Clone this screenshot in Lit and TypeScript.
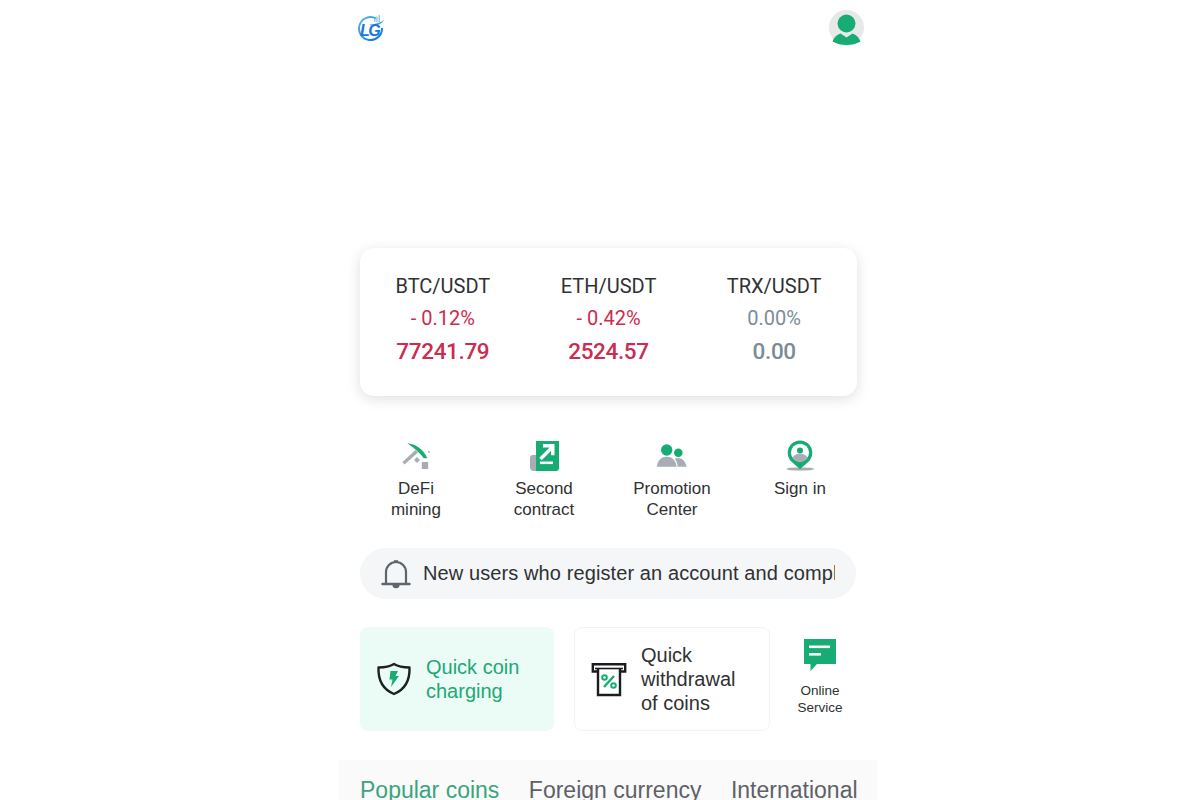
import { LitElement, html, css, svg } from "lit";
import { customElement } from "lit/decorators.js";

const G = "#17ac74";
const GR = "#a8adb3";

const tickers = [
  { pair: "BTC/USDT", pct: "- 0.12%", price: "77241.79", cls: "down" },
  { pair: "ETH/USDT", pct: "- 0.42%", price: "2524.57", cls: "down" },
  { pair: "TRX/USDT", pct: "0.00%", price: "0.00", cls: "flat" },
];

const icons = {
  pick: svg`<svg width="32" height="32" viewBox="0 0 32 32">
    <path d="M2.500 22 L4.500 24.500 L18 12.500 L15.500 10Z" fill="${GR}"/>
    <path d="M7.300 3.300 C15 4 23.500 9 27.300 18.300 L23.800 18.300 C20 13 14 8 7.300 3.300Z" fill="${G}"/>
    <path d="M14 20 l3-3 3 3-3 3Z" fill="${GR}"/>
    <rect x="21.800" y="22" width="6.400" height="7" fill="${GR}"/>
    <circle cx="29" cy="12" r="0.900" fill="${GR}"/>
  </svg>`,
  contract: svg`<svg width="32" height="32" viewBox="0 0 32 32">
    <path d="M8 15 H5 a3 3 0 0 0-3 3 v9 a4 4 0 0 0 4 4 h2Z" fill="${GR}"/>
    <path d="M8 1 h23 v27 a3 3 0 0 1-3 3 h-20Z" fill="${G}"/>
    <path d="M12.500 19 L24 7.500 M15 5.800 h9.800 v9.400" fill="none" stroke="#fff" stroke-width="3.400"/>
    <rect x="12" y="21.500" width="13" height="2.600" fill="#fff"/>
  </svg>`,
  promo: svg`<svg width="32" height="32" viewBox="0 0 32 32">
    <circle cx="10.700" cy="10" r="5.700" fill="${G}"/>
    <circle cx="22.300" cy="12.700" r="4.300" fill="${G}"/>
    <path d="M0.700 26.700 C2 20 5.500 16.800 10.500 16.800 C16 16.800 19.500 20 20.700 26.700Z" fill="${GR}"/>
    <path d="M21.700 26.700 C21.300 23 20.300 20.500 18.800 19 C20 18.300 21.500 18.300 23 18.300 C27 18.500 29.500 22 30.700 26.700Z" fill="${GR}"/>
  </svg>`,
  sign: svg`<svg width="32" height="32" viewBox="0 0 32 32">
    <ellipse cx="16.300" cy="29" rx="13.700" ry="1.600" fill="${GR}"/>
    <path d="M16 29.300 L7.300 21.400 A12.300 12.300 0 1 1 24.700 21.400Z" fill="${G}"/>
    <circle cx="16" cy="12.700" r="9" fill="#fff"/>
    <path d="M8.500 17.500 C10 15 13 13.800 16 13.800 C19 13.800 22 15 23.500 17.500 C22 20 19 21.700 16 21.700 C13 21.700 10 20 8.500 17.500Z" fill="${GR}"/>
    <circle cx="16" cy="10.600" r="3" fill="${G}"/>
  </svg>`,
};

const menu = [
  { icon: icons.pick, label: "DeFi mining" },
  { icon: icons.contract, label: "Second contract" },
  { icon: icons.promo, label: "Promotion Center" },
  { icon: icons.sign, label: "Sign in" },
];

@customElement("app-root")
export class AppRoot extends LitElement {
  static styles = css`
    :host {
      display: block;
      font-family: "Liberation Sans", Arial, sans-serif;
      color: #303133;
      height: 800px;
      overflow: hidden;
      background: #fff;
    }
    .page {
      width: 538px;
      margin-left: 339px;
    }
    .header {
      height: 54px;
      display: flex;
      align-items: center;
      justify-content: space-between;
      padding: 0 13px 0 18px;
    }
    .header svg { display: block; }
    .logo-text { font: italic 700 16px "Liberation Sans", sans-serif; letter-spacing: -1.5px; }
    .banner { height: 194px; }
    .card {
      margin: 0 20px 0 21px;
      height: 148px;
      box-sizing: border-box;
      border-radius: 14px;
      background: #fff;
      box-shadow: 0 3px 14px rgba(0, 0, 0, 0.13);
      display: grid;
      grid-template-columns: repeat(3, 1fr);
      padding-top: 26px;
      text-align: center;
      font-family: Roboto, sans-serif;
    }
    .pair { font-size: 20px; line-height: 24px; color: #303133; }
    .pct { font-size: 20px; line-height: 24px; margin-top: 8px; }
    .price { font-size: 22.5px; line-height: 28px; margin-top: 7px; font-weight: 500; letter-spacing: -0.35px; }
    .down { color: #cb2c50; }
    .flat { color: #7b8c96; }
    .menu {
      margin: 44px 13px 0;
      display: grid;
      grid-template-columns: repeat(4, 128px);
      text-align: center;
      height: 108px;
    }
    .menu svg { display: block; margin: 0 auto 6px; }
    .menu-label {
      font-size: 17px;
      line-height: 21px;
      width: 88px;
      margin: 0 auto;
      color: #303133;
    }
    .notice {
      margin: 0 21px;
      height: 51px;
      border-radius: 26px;
      background: #f4f6f8;
      display: flex;
      align-items: center;
      padding: 0 21px;
      gap: 12px;
    }
    .notice svg { flex: none; }
    .notice-text {
      font-size: 20px;
      letter-spacing: 0.1px;
      white-space: nowrap;
      overflow: hidden;
      flex: 1;
    }
    .actions {
      margin: 28px 0 0 21px;
      display: flex;
      height: 104px;
    }
    .action {
      box-sizing: border-box;
      display: flex;
      align-items: center;
      border-radius: 8px;
      font-size: 20px;
      line-height: 24px;
    }
    .charge {
      width: 194px;
      background: #ebfbf5;
      color: #22a876;
      padding-left: 16px;
      gap: 14px;
      margin-right: 20px;
    }
    .withdraw {
      width: 196px;
      border: 1px solid #f3f3f3;
      padding-left: 16px;
      gap: 14px;
    }
    .service {
      width: 100px;
      text-align: center;
      font-size: 13.5px;
      line-height: 17px;
      padding-top: 12px;
      box-sizing: border-box;
    }
    .service svg { display: block; margin: 0 auto 10px; }
    .tabs {
      margin-top: 29px;
      height: 40px;
      background: #fafafa;
      display: flex;
      gap: 29.500px;
      padding: 16px 0 0 21px;
      box-sizing: border-box;
      overflow: hidden;
      font-size: 23px;
      line-height: 28px;
      white-space: nowrap;
      color: #5f6168;
    }
    .tabs .on { color: #3aa57d; }
  `;

  render() {
    return html`
      <div class="page">
        <div class="header">
          <svg width="28" height="28" viewBox="0 0 28 28">
            <defs>
              <linearGradient id="lg" x1="0" y1="0" x2="1" y2="1">
                <stop offset="0" stop-color="#5fb6f2" />
                <stop offset="1" stop-color="#0c6fe0" />
              </linearGradient>
            </defs>
            <path d="M19 5.500 A11.500 11.500 0 1 0 25 15" fill="none" stroke="url(#lg)" stroke-width="2" />
            <rect x="17" y="5" width="1.400" height="4" fill="#8cc8f4" />
            <rect x="19.300" y="3.500" width="1.400" height="5.500" fill="#8cc8f4" />
            <rect x="21.600" y="2" width="1.400" height="7" fill="#8cc8f4" />
            <path d="M13 11.500 C19 11 24 9.500 27 7 C25 11 20 13 13 12.500Z" fill="#3f9eee" />
            <text x="3" y="22.500" class="logo-text" fill="#1578e0">LG</text>
          </svg>
          <svg width="36" height="36" viewBox="0 0 36 36">
            <circle cx="18.500" cy="18.500" r="17.500" fill="#e8e8e8" />
            <circle cx="18.500" cy="14.500" r="9" fill="${G}" />
            <path d="M4.500 32.500 C6.500 27.500 9.500 25.500 12.500 24.500 L18.500 28.500 L24.500 24.500 C27.500 25.500 30.500 27.500 32.500 32.500 C28.500 35 23.500 36 18.500 36 C13.500 36 8.500 35 4.500 32.500Z" fill="${G}" />
          </svg>
        </div>
        <div class="banner"></div>
        <div class="card">
          ${tickers.map(
            (t) => html`<div>
              <div class="pair">${t.pair}</div>
              <div class="pct ${t.cls}">${t.pct}</div>
              <div class="price ${t.cls}">${t.price}</div>
            </div>`
          )}
        </div>
        <div class="menu">
          ${menu.map(
            (m) => html`<div>
              ${m.icon}
              <div class="menu-label">${m.label}</div>
            </div>`
          )}
        </div>
        <div class="notice">
          <svg width="30" height="30" viewBox="0 0 30 30" fill="none" stroke="#5f656c" stroke-width="2.200">
            <path d="M5 24 V13 a10 10 0 0 1 20 0 V24" />
            <path d="M1.500 25 H28.500" stroke-width="2.400" stroke-linecap="round" />
            <path d="M13 2.500 h4" stroke-width="2.600" />
            <path d="M11.500 26 a3.500 3.200 0 0 0 7 0Z" fill="#5f656c" stroke="none" />
          </svg>
          <div class="notice-text">New users who register an account and complete the real-name verification</div>
        </div>
        <div class="actions">
          <div class="action charge">
            <svg width="36" height="36" viewBox="0 0 36 36">
              <path d="M18 3 C14 5.500 8 6.500 2.500 6.500 C2 19 6 28 18 33 C30 28 34 19 33.500 6.500 C28 6.500 22 5.500 18 3Z" fill="none" stroke="#1e2124" stroke-width="2.400" stroke-linejoin="round" />
              <path d="M14.500 10 H22 L19.500 15 H23 L15 26 L16.500 18.500 H13.500Z" fill="${G}" />
            </svg>
            <div>Quick coin<br />charging</div>
          </div>
          <div class="action withdraw">
            <svg width="36" height="36" viewBox="0 0 36 36" fill="none" stroke="#1a1c1e" stroke-width="2.400">
              <path d="M7 10.500 H1.800 V3.200 H34.200 V10.500 H29" />
              <path d="M4 7.500 H32" stroke-width="1.600" />
              <path d="M7 7.500 V34 H29 V7.500" />
              <path d="M13 26 L23 15" stroke="${G}" stroke-width="2.400" />
              <circle cx="13.500" cy="16.500" r="2.300" stroke="${G}" stroke-width="2" />
              <circle cx="22.500" cy="24.500" r="2.300" stroke="${G}" stroke-width="2" />
            </svg>
            <div>Quick<br />withdrawal<br />of coins</div>
          </div>
          <div class="service">
            <svg width="32" height="33" viewBox="0 0 32 33">
              <path d="M0 0 H32 V25 H13 L6.500 32 V25 H0Z" fill="${G}" />
              <rect x="5" y="6.500" width="21" height="2.600" fill="#fff" />
              <rect x="5" y="14" width="12" height="2.600" fill="#fff" />
            </svg>
            <div>Online<br />Service</div>
          </div>
        </div>
        <div class="tabs">
          <span class="on">Popular coins</span>
          <span>Foreign currency</span>
          <span>International</span>
        </div>
      </div>
    `;
  }
}
